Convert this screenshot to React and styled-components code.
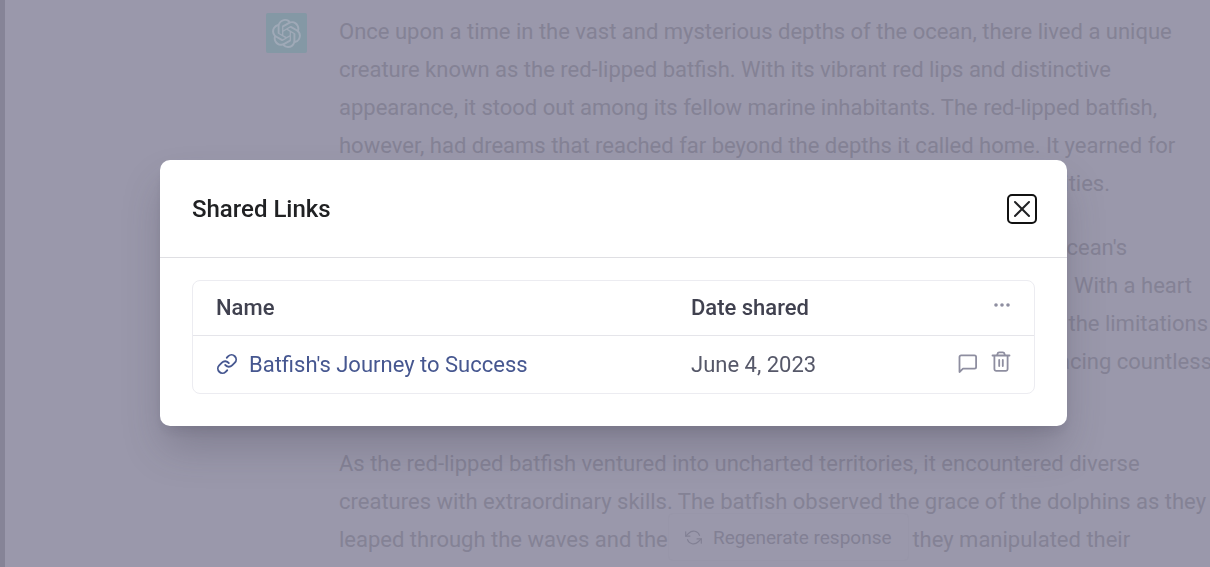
import React from "react";
import styled, { createGlobalStyle } from "styled-components";
import { SiOpenai } from "react-icons/si";
import { FiLink, FiRefreshCcw } from "react-icons/fi";

const story = [
    [
        { text: "Once upon a time in the vast and mysterious depths of the ocean, there lived a unique" },
        { text: "creature known as the red-lipped batfish. With its vibrant red lips and distinctive" },
        { text: "appearance, it stood out among its fellow marine inhabitants. The red-lipped batfish," },
        { text: "however, had dreams that reached far beyond the depths it called home. It yearned for" },
        { text: "success and longed to explore a world filled with endless possibilities.", end: 771 },
    ],
    [
        { text: "One day, the batfish decided to set out on a journey across the ocean's", end: 788 },
        { text: "wide waters, determined to find its own path to success. With a heart", end: 853 },
        { text: "full of courage, it left its home behind and swam past the limitations", end: 869 },
        { text: "of the sea floor, meeting new friends on the way and facing countless", end: 873 },
        { text: "challenges." },
    ],
    [
        { text: "As the red-lipped batfish ventured into uncharted territories, it encountered diverse" },
        { text: "creatures with extraordinary skills. The batfish observed the grace of the dolphins as they" },
        { text: "leaped through the waves and the agility of the octopus as they manipulated their" },
    ],
];

const links = [{ name: "Batfish's Journey to Success", date: "June 4, 2023" }];

function CloseIcon() {
    return (
        <svg width="18" height="18" viewBox="0 0 18 18" fill="none" stroke="currentColor" strokeWidth="2" strokeLinecap="round" aria-hidden="true">
            <path d="M2 2l14 14M16 2L2 16" />
        </svg>
    );
}

function DotsIcon() {
    return (
        <svg width="18" height="6" viewBox="0 0 18 6" fill="currentColor" aria-hidden="true">
            <circle cx="3" cy="3" r="1.8" />
            <circle cx="9" cy="3" r="1.8" />
            <circle cx="15" cy="3" r="1.8" />
        </svg>
    );
}

function ChatIcon() {
    return (
        <svg width="20" height="20" viewBox="0 0 20 20" fill="none" stroke="currentColor" strokeWidth="1.8" strokeLinejoin="round" aria-hidden="true">
            <path d="M1.5 19V4a1.6 1.6 0 0 1 1.6-1.6h13.4A1.6 1.6 0 0 1 18.1 4v10.1a1.6 1.6 0 0 1-1.6 1.6H5z" />
        </svg>
    );
}

function TrashIcon() {
    return (
        <svg width="20" height="22" viewBox="0 0 20 22" fill="none" stroke="currentColor" strokeWidth="1.8" strokeLinecap="round" strokeLinejoin="round" aria-hidden="true">
            <path d="M1.5 4.5h17M3.4 4.5v13.6a1.8 1.8 0 0 0 1.8 1.8h9.6a1.8 1.8 0 0 0 1.8-1.8V4.5M6 4.5l.5-1.8a1.8 1.8 0 0 1 1.8-1.4h3.4a1.8 1.8 0 0 1 1.8 1.4l.5 1.8M8.2 9v6M11.8 9v6" />
        </svg>
    );
}

function SharedLinks() {
    return (
        <Modal role="dialog" aria-labelledby="shared-title">
            <ModalHeader>
                <Title id="shared-title">Shared Links</Title>
                <CloseButton aria-label="Close"><CloseIcon /></CloseButton>
            </ModalHeader>
            <ModalBody>
                <TableFrame>
                    <Table>
                        <thead>
                            <tr>
                                <HeadCell $width="475px">Name</HeadCell>
                                <HeadCell>Date shared</HeadCell>
                                <HeadCell>
                                    <Actions>
                                        <IconButton aria-label="More options"><DotsIcon /></IconButton>
                                    </Actions>
                                </HeadCell>
                            </tr>
                        </thead>
                        <tbody>
                            {links.map((link) => (
                                <tr key={link.name}>
                                    <Cell>
                                        <ChatLink href="#">
                                            <FiLink size={22} strokeWidth={2} />
                                            {link.name}
                                        </ChatLink>
                                    </Cell>
                                    <Cell>{link.date}</Cell>
                                    <Cell>
                                        <Actions>
                                            <IconButton aria-label="View chat"><ChatIcon /></IconButton>
                                            <IconButton aria-label="Delete link"><TrashIcon /></IconButton>
                                        </Actions>
                                    </Cell>
                                </tr>
                            ))}
                        </tbody>
                    </Table>
                </TableFrame>
            </ModalBody>
        </Modal>
    );
}

export default function App() {
    return (
        <Page>
            <GlobalStyle />
            <Message>
                <Avatar><SiOpenai size={29} /></Avatar>
                <Story>
                    {story.map((lines, i) => (
                        <Paragraph key={i}>
                            {lines.map((line) => (
                                <Line key={line.text} $end={line.end}>{line.text}</Line>
                            ))}
                        </Paragraph>
                    ))}
                </Story>
            </Message>
            <Regenerate>
                <FiRefreshCcw size={17} strokeWidth={1.6} />
                Regenerate response
            </Regenerate>
            <Overlay>
                <SharedLinks />
            </Overlay>
        </Page>
    );
}

const GlobalStyle = createGlobalStyle`
* { box-sizing: border-box; }
body {
    margin: 0;
    background: #9a98ab;
    font-family: Roboto, "Liberation Sans", sans-serif;
}
button { font-family: inherit; }
`;

const Page = styled.main`
position: relative;
height: 100vh;
overflow: hidden;
border-left: 5px solid #868497;
`;

const Message = styled.article`
display: flex;
align-items: flex-start;
gap: 32px;
padding: 13px 0 0 261px;
`;

const Avatar = styled.div`
display: flex;
flex-shrink: 0;
align-items: center;
justify-content: center;
width: 41px;
height: 40px;
border-radius: 2px;
background: #8498a5;
color: #9fa9b7;
`;

const Story = styled.div`
flex: 1;
color: #848295;
font-size: 22px;
line-height: 38px;
`;

const Paragraph = styled.p`
margin: 0 0 26px;
`;

const Line = styled.span`
display: block;
width: ${({ $end }) => ($end ? `${$end}px` : "auto")};
text-align: ${({ $end }) => ($end ? "right" : "left")};
white-space: nowrap;
`;

const Regenerate = styled.button`
position: absolute;
bottom: 6px;
left: 663px;
display: flex;
align-items: center;
gap: 11px;
height: 48px;
padding: 0 16px;
border: 1px solid #9896a9;
border-radius: 5px;
background: #9a98ab;
color: #828094;
font-size: 19px;
`;

const Overlay = styled.div`
position: fixed;
inset: 0;
padding: 160px 143px 0 160px;
`;

const Modal = styled.section`
border-radius: 10px;
background: white;
box-shadow: 0 24px 40px -4px rgba(60, 58, 75, 0.28), 0 8px 14px -6px rgba(60, 58, 75, 0.2);
`;

const ModalHeader = styled.header`
display: flex;
align-items: center;
justify-content: space-between;
height: 98px;
padding: 0 30px 0 32px;
border-bottom: 1px solid #dfdfe3;
`;

const Title = styled.h2`
margin: 0;
color: #202123;
font-size: 24px;
font-weight: 500;
`;

const CloseButton = styled.button`
display: flex;
align-items: center;
justify-content: center;
width: 30px;
height: 30px;
padding: 0;
border: 2px solid #111;
border-radius: 5px;
background: white;
color: #202123;
`;

const ModalBody = styled.div`
padding: 22px 32px 32px;
`;

const TableFrame = styled.div`
border: 1px solid #ececf1;
border-radius: 8px;
`;

const Table = styled.table`
width: 100%;
border-collapse: collapse;
font-size: 22px;
text-align: left;
`;

const HeadCell = styled.th`
width: ${({ $width }) => $width || "auto"};
height: 54px;
padding: 0 23px;
border-bottom: 1px solid #e5e5ea;
color: #40414f;
font-weight: 500;
`;

const Cell = styled.td`
height: 58px;
padding: 0 23px;
color: #565869;
`;

const ChatLink = styled.a`
display: flex;
align-items: center;
gap: 11px;
color: #465790;
text-decoration: none;
`;

const Actions = styled.div`
display: flex;
align-items: flex-end;
justify-content: flex-end;
gap: 13px;
padding-bottom: 5px;
`;

const IconButton = styled.button`
display: flex;
padding: 0;
border: 0;
background: none;
color: #8e8ea0;
`;
